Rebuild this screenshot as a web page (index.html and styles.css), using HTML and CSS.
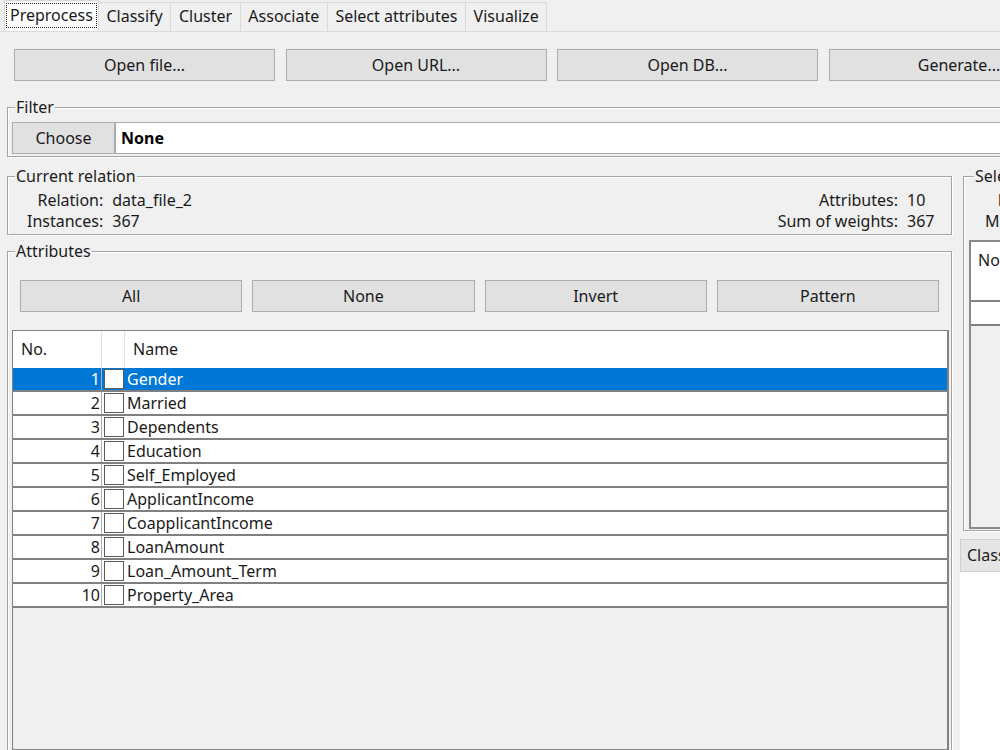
FILE: index.html
```html
<!DOCTYPE html>
<html lang="en">
<head>
    <meta charset="UTF-8">
    <title>Weka Explorer - Preprocess</title>
    <link rel="stylesheet" href="styles.css">
</head>
<body>
    <div class="window">
        <div class="tabs">
            <div class="tab active"><span class="focus">Preprocess</span></div>
            <div class="tab">Classify</div>
            <div class="tab">Cluster</div>
            <div class="tab">Associate</div>
            <div class="tab">Select attributes</div>
            <div class="tab">Visualize</div>
        </div>
        <div class="panel">
            <div class="file-buttons">
                <button class="btn">Open file...</button>
                <button class="btn">Open URL...</button>
                <button class="btn">Open DB...</button>
                <button class="btn">Generate...</button>
            </div>

            <fieldset class="group filter">
                <legend>Filter</legend>
                <div class="filter-row">
                    <button class="btn choose">Choose</button>
                    <div class="filter-text">None</div>
                </div>
            </fieldset>

            <div class="split">
                <div class="left">
                    <fieldset class="group relation">
                        <legend>Current relation</legend>
                        <div class="rel-grid">
                            <span class="k">Relation:</span><span class="v">data_file_2</span>
                            <span class="k">Attributes:</span><span class="v">10</span>
                            <span class="k">Instances:</span><span class="v">367</span>
                            <span class="k">Sum of weights:</span><span class="v">367</span>
                        </div>
                    </fieldset>

                    <fieldset class="group attributes">
                        <legend>Attributes</legend>
                        <div class="attr-buttons">
                            <button class="btn">All</button>
                            <button class="btn">None</button>
                            <button class="btn">Invert</button>
                            <button class="btn">Pattern</button>
                        </div>
                        <div class="table">
                            <div class="thead">
                                <div class="c-no">No.</div>
                                <div class="c-chk"></div>
                                <div class="c-name">Name</div>
                            </div>
                            <div class="row selected"><div class="c-no">1</div><div class="c-chk"><span class="box"></span></div><div class="c-name">Gender</div></div>
                            <div class="row"><div class="c-no">2</div><div class="c-chk"><span class="box"></span></div><div class="c-name">Married</div></div>
                            <div class="row"><div class="c-no">3</div><div class="c-chk"><span class="box"></span></div><div class="c-name">Dependents</div></div>
                            <div class="row"><div class="c-no">4</div><div class="c-chk"><span class="box"></span></div><div class="c-name">Education</div></div>
                            <div class="row"><div class="c-no">5</div><div class="c-chk"><span class="box"></span></div><div class="c-name">Self_Employed</div></div>
                            <div class="row"><div class="c-no">6</div><div class="c-chk"><span class="box"></span></div><div class="c-name">ApplicantIncome</div></div>
                            <div class="row"><div class="c-no">7</div><div class="c-chk"><span class="box"></span></div><div class="c-name">CoapplicantIncome</div></div>
                            <div class="row"><div class="c-no">8</div><div class="c-chk"><span class="box"></span></div><div class="c-name">LoanAmount</div></div>
                            <div class="row"><div class="c-no">9</div><div class="c-chk"><span class="box"></span></div><div class="c-name">Loan_Amount_Term</div></div>
                            <div class="row"><div class="c-no">10</div><div class="c-chk"><span class="box"></span></div><div class="c-name">Property_Area</div></div>
                        </div>
                    </fieldset>
                </div>

                <div class="right">
                    <fieldset class="group selected-attr">
                        <legend>Selected attribute</legend>
                        <div class="sel-grid">
                            <span class="k">Name:</span><span class="v">Gender</span>
                            <span class="k">Missing:</span><span class="v">11 (3%)</span>
                        </div>
                        <div class="stats">
                            <div class="stats-head">No.</div>
                            <div class="stats-row"></div>
                            <div class="stats-row"></div>
                        </div>
                    </fieldset>
                    <div class="class-combo">Class: Property_Area (Nom)</div>
                    <div class="histogram"></div>
                </div>
            </div>
        </div>
    </div>
</body>
</html>
```

FILE: styles.css
```css
* {
    box-sizing: border-box;
}
html, body {
    margin: 0;
    overflow: hidden;
}
body {
    width: 1000px;
    height: 750px;
    background: #f0f0f0;
    font-family: "Noto Sans", sans-serif;
    font-size: 16px;
    color: #1a1a1a;
}
.window {
    width: 1400px;
}

/* tab strip */
.tabs {
    display: flex;
    align-items: flex-end;
    height: 31px;
    padding-left: 4px;
}
.tab {
    height: 29px;
    line-height: 27px;
    padding: 0 7.6px;
    background: #f0f0f0;
    border: 1px solid #d9d9d9;
    border-bottom: none;
    margin-left: -1px;
}
.tab.active {
    height: 31px;
    margin-left: 0;
    padding: 2px 1px 3px;
    background: #fff;
}
.focus {
    display: block;
    height: 25px;
    line-height: 23px;
    padding: 0 3px;
    border: 1px dotted #222;
}

.panel {
    border-top: 1px solid #dadada;
    background: #f0f0f0;
}

.btn {
    height: 32px;
    font-family: inherit;
    font-size: 16px;
    color: #1a1a1a;
    background: #e1e1e1;
    border: 1px solid #adadad;
    padding: 0;
}

.file-buttons {
    display: grid;
    grid-template-columns: repeat(4, 261px);
    column-gap: 10.5px;
    margin: 17px 0 0 14px;
}

/* titled borders */
.group {
    margin: 0;
    padding: 0;
    border: 1px solid #a3a3a3;
    box-shadow: inset 1px 1px 0 #fff, 1px 1px 0 #fff;
    min-width: 0;
}
.group legend {
    padding: 0 1px;
    margin-left: 3px;
    line-height: 22px;
    white-space: nowrap;
}

.filter {
    width: 1300px;
    margin: 15px 0 0 7px;
    padding: 4px 0 2px 4px;
}
.filter-row {
    display: flex;
}
.choose {
    width: 103px;
}
.filter-text {
    flex: 1;
    height: 32px;
    line-height: 30px;
    padding-left: 5px;
    background: #fff;
    border: 1px solid #a8a8a8;
    font-weight: bold;
    color: #000;
}

.split {
    display: flex;
    margin-top: 8px;
}
.left {
    width: 952px;
    flex-shrink: 0;
    padding-left: 7px;
}
.right {
    width: 400px;
    flex-shrink: 0;
    margin-left: 8px;
}

.relation {
    padding: 3px 0 2px 0;
}
.relation legend {
    margin-left: 7px;
}
.rel-grid {
    display: grid;
    grid-template-columns: auto 1fr auto 44px;
    column-gap: 9px;
    line-height: 21px;
    padding-left: 19px;
}
.k {
    text-align: right;
}

.attributes {
    margin-top: 5px;
    height: 520px;
    padding: 0 2px 0 4px;
}
.attr-buttons {
    display: grid;
    grid-template-columns: repeat(4, 1fr);
    column-gap: 10px;
    margin: 18px 10px 18px 8px;
}

/* attribute table */
.table {
    height: 420px;
    background: #f0f0f0;
    border: 1px solid #828282;
    border-right: 2px solid #828282;
}
.thead, .row {
    display: grid;
    grid-template-columns: 89px 23px 1fr;
}
.thead {
    height: 37px;
    line-height: 37px;
    background: #fff;
}
.thead .c-no {
    padding-left: 8px;
    border-right: 1px solid #e3e3e3;
}
.thead .c-chk {
    border-right: 1px solid #e3e3e3;
}
.thead .c-name {
    padding-left: 8px;
}
.row {
    height: 24px;
    line-height: 22px;
    background: #fff;
    border-bottom: 2px solid #808080;
}
.row .c-no {
    text-align: right;
    padding-right: 1px;
    border-right: 1px solid #b0b0b0;
}
.row .c-chk {
    padding: 1px 0 0 2px;
    background: #fff;
}
.box {
    display: block;
    width: 20px;
    height: 20px;
    background: #fff;
    border: 1px solid #5a5a5a;
}
.row .c-name {
    padding-left: 2px;
}
.row.selected {
    background: #0078d7;
    color: #fff;
}
.row.selected .c-chk {
    background: #0078d7;
}

/* right column */
.selected-attr {
    margin-left: 3px;
    height: 366px;
    padding: 3px 0 0 5px;
}
.selected-attr legend {
    margin-left: 5px;
}
.sel-grid {
    display: grid;
    grid-template-columns: auto 1fr;
    column-gap: 9px;
    line-height: 21px;
    padding-left: 16px;
}
.stats {
    height: 289px;
    margin-top: 8px;
    background: #f0f0f0;
    border: 2px solid #8a8a8a;
    border-right: none;
}
.stats-head {
    height: 36px;
    line-height: 36px;
    padding-left: 7px;
    background: #fff;
}
.stats-row {
    height: 24px;
    background: #fff;
    border-bottom: 2px solid #808080;
}
.class-combo {
    margin-top: 8px;
    height: 33px;
    line-height: 31px;
    padding-left: 6px;
    white-space: nowrap;
    overflow: hidden;
    background: #e5e5e5;
    border: 1px solid #cfcfcf;
}
.histogram {
    height: 200px;
    background: #fff;
}
```
